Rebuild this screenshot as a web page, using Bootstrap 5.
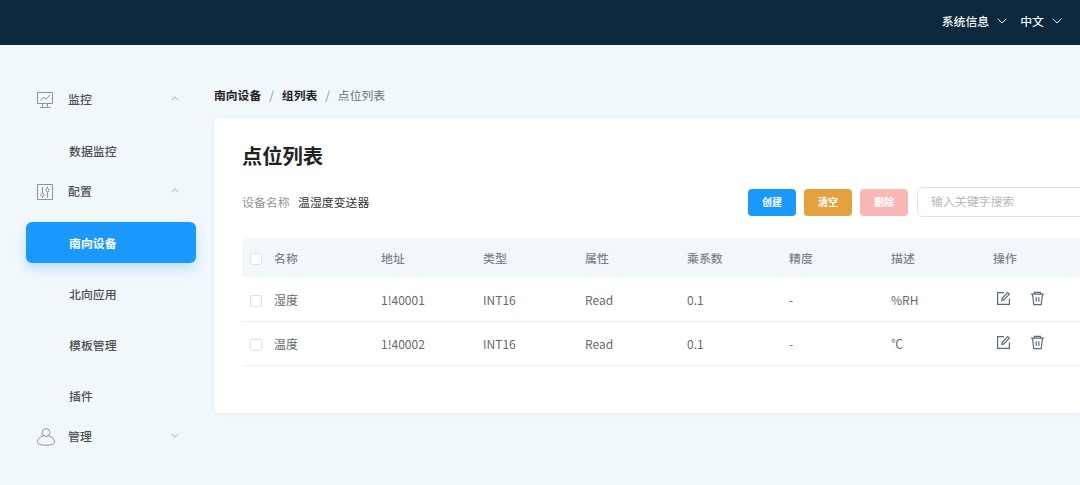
<!DOCTYPE html>
<html lang="zh-CN">
<head>
<meta charset="utf-8">
<meta name="viewport" content="width=device-width, initial-scale=1">
<title>点位列表</title>
<link href="https://cdn.jsdelivr.net/npm/bootstrap@5.3.0/dist/css/bootstrap.min.css" rel="stylesheet">
<style>
body{font-family:"Noto Sans CJK SC",sans-serif;font-size:12px;line-height:18px;background:#f1f8fc;color:#4c5054;height:485px;overflow:hidden}
svg{fill:none;stroke:currentColor;flex:none;display:block}
.topbar{height:45px;background:#0b283e;color:#f4f7fa;font-size:11.9px;font-weight:500;padding:0 18px 3px 0}
.topbar svg{margin-left:8px}
.topbar .lang{margin-left:13px}
.shell{height:440px}
.side{width:214px;padding:39px 18px 0 26px;font-size:11.9px;font-weight:500;flex:none}
.group{height:31px;margin-bottom:10px;padding:0 17px 0 10px}
.group .ico{width:20px;color:#8d959c}
.group .label{margin-left:12px;margin-top:-1px}
.group .arrow{color:#a3a9ae;margin-top:-3px}
.item{height:41px;margin:5px 0;padding:0 0 0 43px;border-radius:6px;color:inherit}
.item.active{background:#1b98fc;color:#fff;font-weight:700;box-shadow:0 6px 12px rgba(27,152,252,.24)}
.main{width:926px;flex:none;padding-top:41px}
.crumbs{--bs-breadcrumb-item-padding-x:8px;font-size:11.8px;margin-bottom:14px;color:#222;font-weight:700}
.crumbs .breadcrumb-item::before{font-weight:400;color:#8b9197}
.crumbs .active{color:#686d72;font-weight:400}
.panel{height:295px;border:0;border-radius:6px;padding:22px 28px 0;box-shadow:0 0 4px rgba(60,80,100,.09)}
.panel h1{font-size:20.3px;line-height:30px;font-weight:700;color:#202224;margin:0}
.tools{height:28px;margin-top:18px;margin-bottom:22px;font-size:11.9px}
.tools .field{color:#909396;width:56px}
.tools .value{color:#303336}
.act{width:48px;height:27px;padding:0 0 1px;border:0;border-radius:4px;font-size:10px;font-weight:700;color:#fff!important;margin-right:8px}
.act-create{background:#1b98fc!important}
.act-clear{background:#e4a23e!important}
.act-delete{background:#f9b7b8!important;opacity:1!important}
.search{width:195px;height:30px;border:1px solid #dfe2e6;border-radius:6px;font-size:11.9px;padding:0 13px 3px;margin-left:1px}
.search::placeholder{color:#b4b8bd}
.points{width:870px;table-layout:fixed;color:#66696c;margin:0}
.points>:not(caption)>*>*{padding:0;color:inherit;background:transparent;box-shadow:none;border-bottom:1px solid #ebeef1}
.points>thead>tr>th{height:39px;font-size:11.9px;font-weight:500;color:#7f8388;border:0;background:#f2f7fb;vertical-align:middle;padding-top:1px}
.points thead th:first-child{border-radius:6px 0 0 0}
.points>tbody>tr>td{height:44px;padding-top:2px}
.points .form-check-input{width:12px;height:12px;margin:2px 0 0 8px;border:1px solid #dfe2e6;border-radius:2px;display:block;float:none}
.ops{gap:19px;padding:0 0 3px 3px;color:#5b6a7a}
</style>
</head>
<body>
<header class="topbar d-flex align-items-center justify-content-end">
  <span>系统信息</span>
  <svg width="10" height="6" viewBox="0 0 10 6"><path d="M.7.7 5 5 9.300.7"/></svg>
  <span class="lang">中文</span>
  <svg width="10" height="6" viewBox="0 0 10 6"><path d="M.7.7 5 5 9.300.7"/></svg>
</header>
<div class="shell d-flex overflow-hidden">
  <nav class="side d-flex flex-column">
    <div class="group d-flex align-items-center">
      <svg class="ico" width="20" height="18" viewBox="0 0 20 18"><path d="M1.500 1.500h15v11h-15zM6.500 12.500v3.500M11.500 12.500v3.500M4 16.500h10.500M4.500 9.500l2.500-3 3 1.500 4-4"/></svg>
      <span class="label">监控</span>
      <svg class="arrow ms-auto" width="8" height="5" viewBox="0 0 8 5"><path d="M.5 4.300 4 .8l3.500 3.500"/></svg>
    </div>
    <a class="item nav-link d-flex align-items-center">数据监控</a>
    <div class="group d-flex align-items-center">
      <svg class="ico" width="20" height="18" viewBox="0 0 20 18"><path d="M1.500 1.500h15v15h-15zM6.500 4v6M6.500 13.500v1.500M11.500 3.500v2M11.500 9v5.500"/><circle cx="6.500" cy="11.700" r="1.700"/><circle cx="11.500" cy="7.200" r="1.700"/></svg>
      <span class="label">配置</span>
      <svg class="arrow ms-auto" width="8" height="5" viewBox="0 0 8 5"><path d="M.5 4.300 4 .8l3.500 3.500"/></svg>
    </div>
    <a class="item active nav-link d-flex align-items-center">南向设备</a>
    <a class="item nav-link d-flex align-items-center">北向应用</a>
    <a class="item nav-link d-flex align-items-center">模板管理</a>
    <a class="item nav-link d-flex align-items-center">插件</a>
    <div class="group d-flex align-items-center">
      <svg class="ico" width="20" height="18" viewBox="0 0 20 18"><circle cx="10" cy="4.500" r="3.900"/><path d="M7.500 7.700C3.500 8.800 1.500 11.500 1.500 14c0 2.200 4 3.200 8.500 3.200s8.500-1 8.500-3.200c0-2.500-2-5.200-6-6.300"/></svg>
      <span class="label">管理</span>
      <svg class="arrow ms-auto" width="8" height="5" viewBox="0 0 8 5"><path d="M.5.7 4 4.200 7.500.7"/></svg>
    </div>
  </nav>
  <main class="main">
    <ol class="breadcrumb crumbs">
      <li class="breadcrumb-item">南向设备</li>
      <li class="breadcrumb-item">组列表</li>
      <li class="breadcrumb-item active">点位列表</li>
    </ol>
    <section class="panel card">
      <h1>点位列表</h1>
      <div class="tools d-flex align-items-center">
        <span class="field">设备名称</span><span class="value">温湿度变送器</span>
        <div class="d-flex align-items-center ms-auto">
          <button class="btn act act-create">创建</button>
          <button class="btn act act-clear">清空</button>
          <button class="btn act act-delete" disabled>删除</button>
          <input class="form-control search" placeholder="输入关键字搜索">
        </div>
      </div>
      <table class="table points align-middle">
        <colgroup><col style="width:32px"><col style="width:107px"><col style="width:102px"><col style="width:102px"><col style="width:102px"><col style="width:102px"><col style="width:102px"><col style="width:102px"><col></colgroup>
        <thead><tr><th><input class="form-check-input" type="checkbox"></th><th>名称</th><th>地址</th><th>类型</th><th>属性</th><th>乘系数</th><th>精度</th><th>描述</th><th>操作</th></tr></thead>
        <tbody>
          <tr><td><input class="form-check-input" type="checkbox"></td><td>湿度</td><td>1!40001</td><td>INT16</td><td>Read</td><td>0.1</td><td>-</td><td>%RH</td>
            <td><div class="ops d-flex">
              <svg width="15" height="15" viewBox="0 0 15 15" stroke-width="1.200"><path d="M8 1.600H1.600v11.800h11.800V7.500M5.800 9.500l.4-2.200 5.500-5.600 1.600 1.600-5.500 5.600z"/></svg>
              <svg width="15" height="15" viewBox="0 0 15 15" stroke-width="1.200"><path d="M1 3.200h13M4.500 3.200V1.300h6v1.900M2.500 3.200l1.300 10.500h7.400l1.300-10.500M6.200 6.200v4.600M8.800 6.200v4.600"/></svg>
            </div></td></tr>
          <tr><td><input class="form-check-input" type="checkbox"></td><td>温度</td><td>1!40002</td><td>INT16</td><td>Read</td><td>0.1</td><td>-</td><td>℃</td>
            <td><div class="ops d-flex">
              <svg width="15" height="15" viewBox="0 0 15 15" stroke-width="1.200"><path d="M8 1.600H1.600v11.800h11.800V7.500M5.800 9.500l.4-2.200 5.500-5.600 1.600 1.600-5.500 5.600z"/></svg>
              <svg width="15" height="15" viewBox="0 0 15 15" stroke-width="1.200"><path d="M1 3.200h13M4.500 3.200V1.300h6v1.900M2.500 3.200l1.300 10.500h7.400l1.300-10.500M6.200 6.200v4.600M8.800 6.200v4.600"/></svg>
            </div></td></tr>
        </tbody>
      </table>
    </section>
  </main>
</div>
<script src="https://cdn.jsdelivr.net/npm/bootstrap@5.3.0/dist/js/bootstrap.bundle.min.js"></script>
</body>
</html>
